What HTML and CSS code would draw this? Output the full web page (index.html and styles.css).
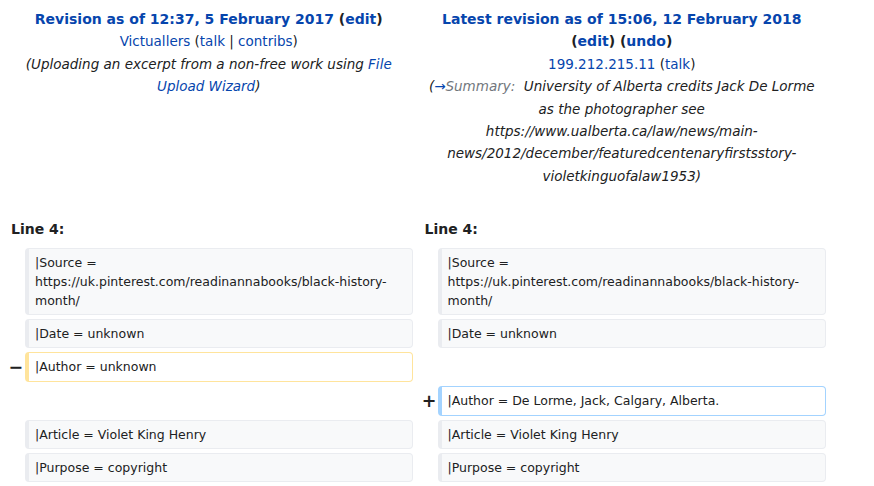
FILE: index.html
```html
<!DOCTYPE html>
<html lang="en">
<head>
<meta charset="utf-8">
<title>Difference between revisions</title>
<link rel="stylesheet" href="styles.css">
</head>
<body>
<table class="diff">
  <colgroup>
    <col class="col-marker-l">
    <col class="col-content">
    <col class="col-marker-r">
    <col class="col-content">
  </colgroup>
  <tr class="diff-title">
    <td colspan="2" class="diff-otitle">
      <div class="title"><a href="#">Revision as of 12:37, 5 February 2017</a> (<a href="#">edit</a>)</div>
      <div class="user"><a href="#">Victuallers</a> (<a href="#">talk</a> | <a href="#">contribs</a>)</div>
      <div class="comment">(Uploading an excerpt from a non-free work using <a href="#">File Upload Wizard</a>)</div>
    </td>
    <td colspan="2" class="diff-ntitle">
      <div class="title"><a href="#">Latest revision as of 15:06, 12 February 2018</a> (<a href="#">edit</a>) (<a href="#">undo</a>)</div>
      <div class="user"><a href="#">199.212.215.11</a> (<a href="#">talk</a>)</div>
      <div class="comment">(<a href="#" class="arrow">→</a><span class="autocomment">Summary:</span>&nbsp; University of Alberta credits Jack De Lorme as the photographer see https://www.ualberta.ca/law/news/main-news/2012/december/featuredcentenaryfirstsstory-violetkinguofalaw1953)</div>
    </td>
  </tr>
  <tr>
    <td colspan="2" class="diff-lineno">Line 4:</td>
    <td colspan="2" class="diff-lineno">Line 4:</td>
  </tr>
  <tr>
    <td class="diff-marker"></td>
    <td class="diff-context"><div>|Source = https://uk.pinterest.com/readinannabooks/black-history-month/</div></td>
    <td class="diff-marker"></td>
    <td class="diff-context"><div>|Source = https://uk.pinterest.com/readinannabooks/black-history-month/</div></td>
  </tr>
  <tr>
    <td class="diff-marker"></td>
    <td class="diff-context"><div>|Date = unknown</div></td>
    <td class="diff-marker"></td>
    <td class="diff-context"><div>|Date = unknown</div></td>
  </tr>
  <tr>
    <td class="diff-marker">−</td>
    <td class="diff-deletedline"><div>|Author = unknown</div></td>
    <td colspan="2" class="diff-empty"></td>
  </tr>
  <tr>
    <td colspan="2" class="diff-empty"></td>
    <td class="diff-marker">+</td>
    <td class="diff-addedline"><div>|Author = De Lorme, Jack, Calgary, Alberta.</div></td>
  </tr>
  <tr>
    <td class="diff-marker"></td>
    <td class="diff-context"><div>|Article = Violet King Henry</div></td>
    <td class="diff-marker"></td>
    <td class="diff-context"><div>|Article = Violet King Henry</div></td>
  </tr>
  <tr>
    <td class="diff-marker"></td>
    <td class="diff-context"><div>|Purpose = copyright</div></td>
    <td class="diff-marker"></td>
    <td class="diff-context"><div>|Purpose = copyright</div></td>
  </tr>
</table>
</body>
</html>
```
FILE: styles.css
```css
html, body {
  margin: 0;
  padding: 0;
  background: #ffffff;
}
body {
  font-family: "DejaVu Sans", sans-serif;
  font-size: 14px;
  line-height: 1.6;
  color: #202122;
}
a {
  color: #0645ad;
  text-decoration: none;
}
.diff {
  width: 830px;
  table-layout: fixed;
  border-collapse: separate;
  border-spacing: 4px;
  margin: 0;
}
.col-marker-l { width: 17px; }
.col-marker-r { width: 16px; }
.col-content { width: 388px; }
.diff td {
  padding: 0.33em 0.5em;
  vertical-align: top;
}
.diff .diff-otitle,
.diff .diff-ntitle {
  text-align: center;
  padding: 4px 7px 23px;
}
.title {
  font-weight: bold;
  font-size: 14px;
  line-height: 22.4px;
}
.user,
.comment {
  font-size: 13.5px;
  line-height: 22.4px;
}
.comment {
  font-style: italic;
}
.autocomment {
  color: #72777d;
}
.diff .diff-lineno {
  font-weight: bold;
  padding: 4px 7px 3px;
}
.diff .diff-marker {
  font-size: 17.5px;
  font-weight: bold;
  line-height: 1.2;
  text-align: right;
  vertical-align: middle;
  padding: 0.25em;
  color: #202122;
}
.diff .diff-context,
.diff .diff-deletedline,
.diff .diff-addedline {
  font-size: 12.5px;
  line-height: 19.2px;
  padding: 4px 12px 4px 6px;
  border-style: solid;
  border-width: 1px 1px 1px 4px;
  border-radius: 4px;
  white-space: pre-wrap;
  overflow-wrap: break-word;
}
.diff .diff-context {
  background: #f8f9fa;
  border-color: #eaecf0;
  color: #202122;
}
.diff .diff-deletedline {
  background: #ffffff;
  border-color: #ffe49c;
}
.diff .diff-addedline {
  background: #ffffff;
  border-color: #a3d3ff;
}
.diff .diff-empty {
  padding: 0;
}
```
